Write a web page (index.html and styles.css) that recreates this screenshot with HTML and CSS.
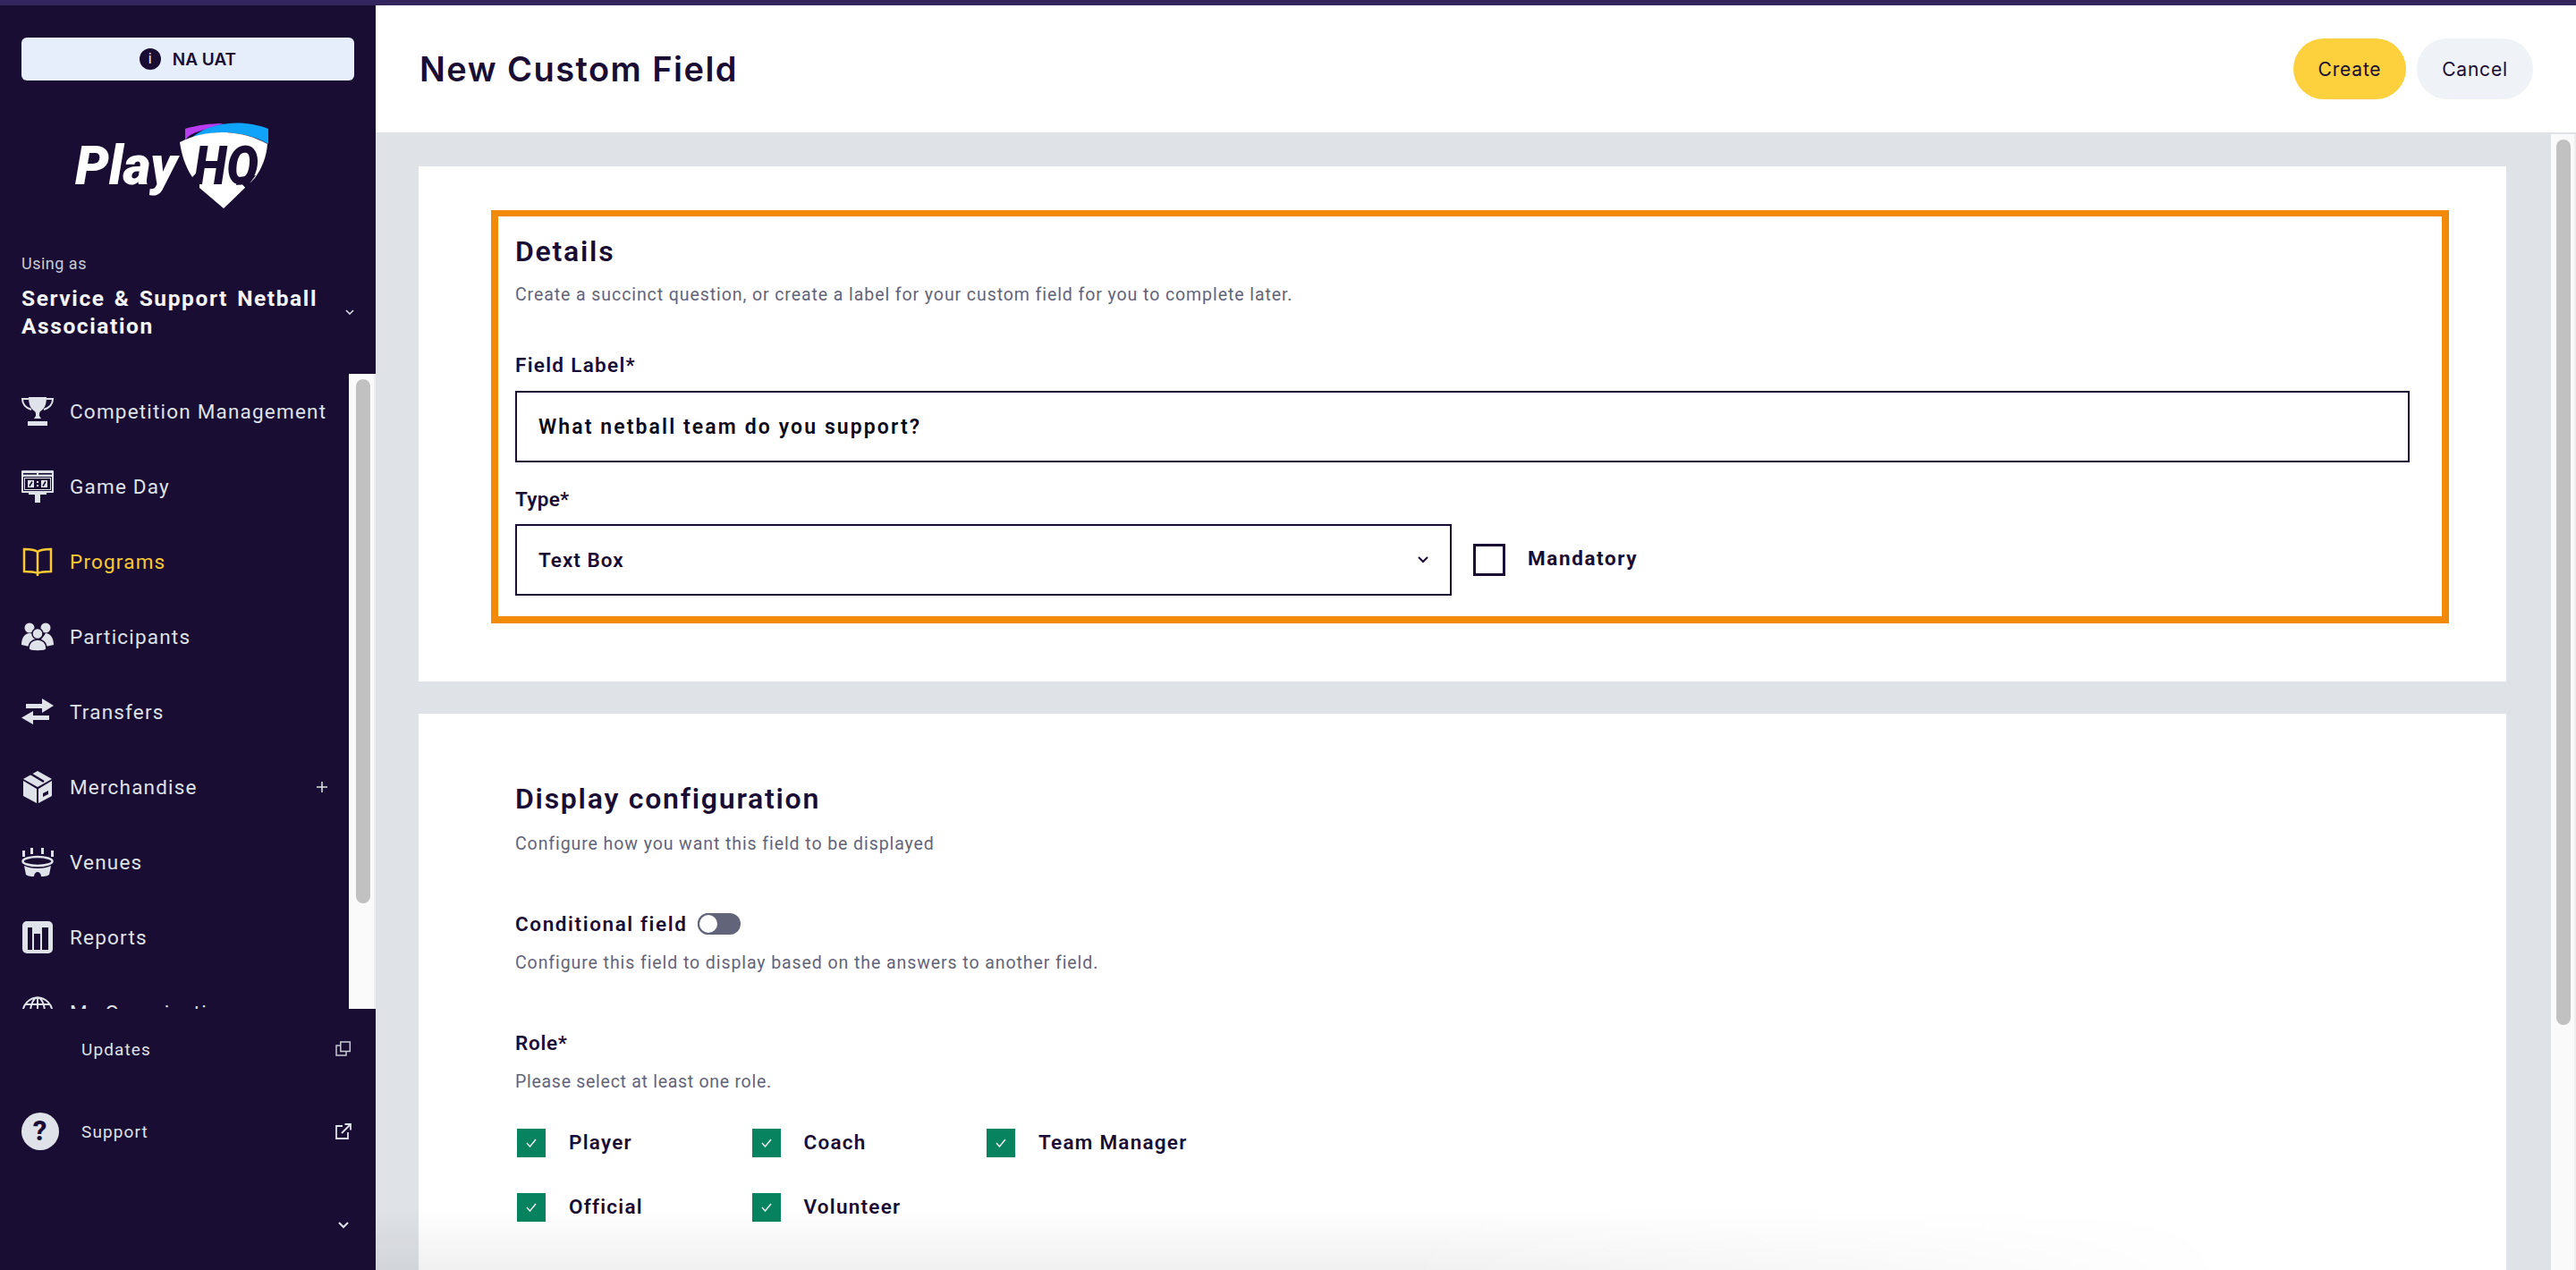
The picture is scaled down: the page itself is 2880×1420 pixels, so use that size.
FILE: index.html
```html
<!DOCTYPE html>
<html lang="en">
<head>
<meta charset="utf-8">
<title>New Custom Field</title>
<link rel="stylesheet" href="styles.css">
</head>
<body>
<div class="topline"></div>
<div class="app">
  <aside class="sidebar">
    <div class="env"><span class="env-i">i</span><span>NA UAT</span></div>
    <svg class="logo" viewBox="0 0 260 130" width="260" height="130">
      <path fill="#b93df0" d="M147 24C160 20 175 18 190 18L165 26C155 29 150 32 147 37Z"/>
      <path fill="#0fa3fb" d="M152 36C175 14 215 14 240 24L240 41C215 26 175 24 152 36Z"/>
      <path fill="#fff" d="M141 39C170 24 210 24 239 41C238 55 233 68 225 79L219 85L190 113L163 90L163 70L155 78C147 66 143 53 141 39Z"/>
      <text class="logo-play" x="24" y="86" textLength="114" lengthAdjust="spacingAndGlyphs">Play</text>
      <text class="logo-hq" x="157" y="86" textLength="72" lengthAdjust="spacingAndGlyphs">HQ</text>
      <path fill="#1a0d33" d="M206 78L226 76L219 85L204 87Z"/>
    </svg>
    <div class="using">Using as</div>
    <div class="org">
      <div class="org-name">Service &amp; Support Netball Association</div>
      <svg class="org-chev" viewBox="0 0 10 6" width="10" height="6"><path d="M1 1l4 4 4-4" fill="none" stroke="#dfe2e8" stroke-width="1.5"/></svg>
    </div>
    <div class="nav">
      <nav class="nav-list">
        <a class="nav-item">
          <svg class="nav-icon" viewBox="0 0 36 36"><g fill="#dfe2e8"><path d="M8 2h20c0 8-2 13-7 16l-1 2v3l2 3H14l2-3v-3l-1-2C10 15 8 10 8 2z"/><rect x="7" y="29" width="22" height="5"/></g><path d="M8 4H1c0 6 4 10 10 12M28 4h7c0 6-4 10-10 12" fill="none" stroke="#dfe2e8" stroke-width="2"/></svg>
          <span>Competition Management</span>
        </a>
        <a class="nav-item">
          <svg class="nav-icon" viewBox="0 0 36 36"><g fill="#dfe2e8"><rect x="0" y="0" width="36" height="25" rx="1"/><rect x="8" y="25" width="20" height="2"/><rect x="15" y="27" width="6" height="9"/></g><g fill="#1a0d33"><rect x="2" y="3" width="15" height="1.6"/><rect x="19" y="3" width="15" height="1.6"/><rect x="2" y="7" width="32" height="16"/></g><rect x="3.500" y="8.500" width="29" height="13" fill="none" stroke="#dfe2e8"/><g fill="#dfe2e8"><rect x="7" y="11" width="7" height="8"/><rect x="22" y="11" width="7" height="8"/><rect x="17" y="12" width="2" height="2"/><rect x="17" y="16" width="2" height="2"/></g><path d="M9 17.500l3-5M24 17.500l3-5" stroke="#1a0d33" stroke-width="1.500"/></svg>
          <span>Game Day</span>
        </a>
        <a class="nav-item nav-active">
          <svg class="nav-icon" viewBox="0 0 36 36"><path d="M18 7C14 4 8 4 3 4v25c6 0 11 0 15 2 4-2 9-2 15-2V4c-5 0-11 0-15 3zm0 0v27" fill="none" stroke="#fcc934" stroke-width="2.500"/></svg>
          <span>Programs</span>
        </a>
        <a class="nav-item">
          <svg class="nav-icon" viewBox="0 0 36 36"><g fill="#dfe2e8"><circle cx="9" cy="8" r="5.500"/><circle cx="27" cy="8" r="5.500"/><path d="M0 27c0-8 4-13 9-13s8 3 9 8 9-8 9-8c5 0 9 5 9 13l-9 2H9z"/></g><circle cx="18" cy="14.500" r="6" fill="#dfe2e8" stroke="#1a0d33" stroke-width="1.500"/><path d="M8 31c0-6 4-10 10-10s10 4 10 10c0 2-5 3-10 3s-10-1-10-3z" fill="#dfe2e8" stroke="#1a0d33" stroke-width="1.500"/></svg>
          <span>Participants</span>
        </a>
        <a class="nav-item">
          <svg class="nav-icon" viewBox="0 0 36 36"><path fill="#dfe2e8" d="M23 3l13 8-13 8v-5H5V9h18zM13 17v5h18v5H13v5L0 24.500z"/></svg>
          <span>Transfers</span>
        </a>
        <a class="nav-item">
          <svg class="nav-icon" viewBox="0 0 36 36"><g fill="#dfe2e8"><path d="M18 0l16 9-16 9-16-9z"/><path d="M2 11l15 9v16L2 28z"/><path d="M34 11l-15 9v16l15-8z"/></g><path d="M10 3l15 9" stroke="#1a0d33" stroke-width="2.500"/><path d="M24 25l6-3v4l-6 3z" fill="#1a0d33"/></svg>
          <span>Merchandise</span>
          <svg class="nav-plus" viewBox="0 0 12 12" width="12" height="12"><path d="M6 0v12M0 6h12" stroke="#dfe2e8" stroke-width="1.500"/></svg>
        </a>
        <a class="nav-item">
          <svg class="nav-icon" viewBox="0 0 36 36"><g fill="#dfe2e8"><rect x="1" y="5" width="3" height="7"/><rect x="10" y="2" width="3" height="7"/><rect x="22" y="2" width="3" height="7"/><rect x="33" y="5" width="3" height="7"/><path d="M3 22c4 2 9 3 15 3s11-1 15-3l-2 10c-3 2-6 2-9 2 0-3-2-5-4-5s-4 2-4 5c-3 0-6 0-9-2z"/></g><ellipse cx="18" cy="17" rx="16.500" ry="5" fill="none" stroke="#dfe2e8" stroke-width="2.500"/></svg>
          <span>Venues</span>
        </a>
        <a class="nav-item">
          <svg class="nav-icon" viewBox="0 0 36 36"><rect x="1" y="0" width="34" height="36" rx="5" fill="#dfe2e8"/><g fill="#1a0d33"><rect x="7" y="7" width="5" height="25"/><rect x="14" y="14" width="7" height="18"/><rect x="23" y="7" width="7" height="25"/></g></svg>
          <span>Reports</span>
        </a>
        <a class="nav-item">
          <svg class="nav-icon" viewBox="0 0 36 36"><g fill="none" stroke="#dfe2e8" stroke-width="2"><circle cx="18" cy="18" r="16.500"/><ellipse cx="18" cy="18" rx="8" ry="16.500"/><path d="M18 1v34M2 18h32M4 9h28M4 27h28"/></g></svg>
          <span>My Organisation</span>
        </a>
      </nav>
      <div class="side-track"><div class="side-thumb"></div></div>
    </div>
    <div class="side-foot">
      <div class="foot-row">
        <span class="foot-blank"></span>
        <span>Updates</span>
        <svg class="foot-ext" viewBox="0 0 18 18" width="18" height="18"><path d="M5 5H1v11h11v-4" fill="none" stroke="#c9cad4" stroke-width="1.500"/><rect x="5.800" y="1" width="10.500" height="10.500" fill="none" stroke="#c9cad4" stroke-width="1.500"/></svg>
      </div>
      <div class="foot-row foot-support">
        <span class="foot-help">?</span>
        <span>Support</span>
        <svg class="foot-ext" viewBox="0 0 18 18" width="18" height="18"><path d="M8 3H1v14h13v-7M7 11L17 1M10.500 1H17v6.500" fill="none" stroke="#dfe2e8" stroke-width="1.800"/></svg>
      </div>
      <div class="foot-chev"><svg viewBox="0 0 12 8" width="12" height="8"><path d="M1 1l5 5 5-5" fill="none" stroke="#dfe2e8" stroke-width="2"/></svg></div>
    </div>
  </aside>
  <main class="main">
    <header class="head">
      <h1 class="title">New Custom Field</h1>
      <div class="actions">
        <button class="btn btn-create">Create</button>
        <button class="btn btn-cancel">Cancel</button>
      </div>
    </header>
    <div class="body">
      <div class="content">
        <section class="card card-details">
          <div class="highlight">
            <h2 class="h2">Details</h2>
            <p class="sub sub-details">Create a succinct question, or create a label for your custom field for you to complete later.</p>
            <div class="label label-first">Field Label*</div>
            <div class="control control-text">What netball team do you support?</div>
            <div class="label label-type">Type*</div>
            <div class="type-row">
              <div class="control control-select"><span>Text Box</span>
                <svg viewBox="0 0 12 8" width="12" height="8"><path d="M1 1l5 5 5-5" fill="none" stroke="#1a0d33" stroke-width="2"/></svg>
              </div>
              <span class="box"></span>
              <span class="mandatory">Mandatory</span>
            </div>
          </div>
        </section>
        <section class="card card-display">
          <h2 class="h2">Display configuration</h2>
          <p class="sub sub-display">Configure how you want this field to be displayed</p>
          <div class="cond-row"><span class="label label-cond">Conditional field</span><span class="toggle"><span class="knob"></span></span></div>
          <p class="sub sub-cond">Configure this field to display based on the answers to another field.</p>
          <div class="label label-role">Role*</div>
          <p class="sub sub-role">Please select at least one role.</p>
          <div class="roles">
            <div class="role"><span class="tick"><svg viewBox="0 0 12 10" width="12" height="10"><path d="M1 5l3.500 4L11 1" fill="none" stroke="#fff" stroke-width="1.300"/></svg></span><span class="role-name">Player</span></div>
            <div class="role"><span class="tick"><svg viewBox="0 0 12 10" width="12" height="10"><path d="M1 5l3.500 4L11 1" fill="none" stroke="#fff" stroke-width="1.300"/></svg></span><span class="role-name">Coach</span></div>
            <div class="role"><span class="tick"><svg viewBox="0 0 12 10" width="12" height="10"><path d="M1 5l3.500 4L11 1" fill="none" stroke="#fff" stroke-width="1.300"/></svg></span><span class="role-name">Team Manager</span></div>
            <div class="role"><span class="tick"><svg viewBox="0 0 12 10" width="12" height="10"><path d="M1 5l3.500 4L11 1" fill="none" stroke="#fff" stroke-width="1.300"/></svg></span><span class="role-name">Official</span></div>
            <div class="role"><span class="tick"><svg viewBox="0 0 12 10" width="12" height="10"><path d="M1 5l3.500 4L11 1" fill="none" stroke="#fff" stroke-width="1.300"/></svg></span><span class="role-name">Volunteer</span></div>
          </div>
        </section>
      </div>
      <div class="track"><div class="thumb"></div></div>
      <div class="fade"></div>
    </div>
  </main>
</div>
</body>
</html>
```

FILE: styles.css
```css
* { box-sizing: border-box; }
html, body { margin: 0; padding: 0; height: 100%; overflow: hidden; }
body { font-family: Roboto, "Noto Sans", sans-serif; color: #1a0d33; background: #fff; }
.topline { height: 6px; background: #33265f; }
.app { display: flex; height: 1414px; }

/* sidebar */
.sidebar { width: 420px; flex: none; background: #1a0d33; display: flex; flex-direction: column; color: #dfe2e8; }
.env { margin: 36px 24px 0; height: 48px; border-radius: 6px; background: #e6eefc; color: #1a0d33; display: flex; align-items: center; justify-content: center; gap: 13px; font: 600 19px Inter, sans-serif; }
.env-i { width: 24px; height: 24px; border-radius: 50%; background: #1a0d33; color: #e6eefc; font: 400 16px/24px Roboto, sans-serif; text-align: center; }
.logo { display: block; margin: 30px 0 0 60px; flex: none; }
.logo-play, .logo-hq { font-family: Roboto, sans-serif; font-style: italic; font-weight: 900; font-size: 61px; }
.logo-play { fill: #fff; }
.logo-hq { fill: #1a0d33; }
.using { margin: 33px 0 0 24px; font-size: 18px; line-height: 24px; letter-spacing: 0.5px; color: #c9cad4; }
.org { margin: 11px 0 0 24px; display: flex; align-items: center; }
.org-name { width: 361px; font-size: 24.5px; font-weight: 700; line-height: 31px; letter-spacing: 1.6px; word-spacing: 2.5px; color: #f4f5f8; }
.org-chev { flex: none; margin-left: 1px; }
.nav { margin-top: 38px; height: 710px; display: flex; overflow: hidden; background: #eee; padding-right: 2px; flex: none; }
.nav-list { width: 390px; background: #1a0d33; flex: none; height: 756px; }
.nav-item { height: 84px; display: flex; align-items: center; padding: 0 24px; gap: 18px; font-size: 22.5px; letter-spacing: 1.2px; color: #dfe2e8; }
.nav-icon { width: 36px; height: 36px; flex: none; }
.nav-active { color: #fcc934; }
.nav-plus { margin-left: auto; }
.side-track { width: 28px; background: #fafafa; padding: 6px 4px 0 8px; }
.side-thumb { height: 586px; background: #c1c1c1; border-radius: 8px; }
.side-foot { flex: 1; padding-top: 22px; font-size: 19px; letter-spacing: 1.1px; color: #dfe2e8; }
.foot-row { height: 46px; display: flex; align-items: center; padding: 0 27px 0 24px; gap: 25px; }
.foot-support { margin-top: 46px; }
.foot-blank { width: 42px; flex: none; }
.foot-help { width: 42px; height: 42px; border-radius: 50%; background: #dfe2e8; color: #1a0d33; font: 800 31px/42px Roboto, sans-serif; text-align: center; flex: none; }
.foot-ext { margin-left: auto; flex: none; }
.foot-chev { margin-top: 78px; padding-right: 30px; display: flex; justify-content: flex-end; }
.foot-chev svg { display: block; }

/* main */
.main { flex: 1; display: flex; flex-direction: column; min-width: 0; }
.head { height: 142px; flex: none; display: flex; align-items: center; justify-content: space-between; padding: 0 48px 0 49px; background: #fff; }
.title { margin: 0; font: 600 38px/48px Inter, sans-serif; letter-spacing: 1.45px; }
.actions { display: flex; gap: 12px; }
.btn { height: 68px; border: 0; border-radius: 34px; font: 400 21px Inter, sans-serif; letter-spacing: 0.8px; color: #1a0d33; }
.btn-create { width: 126px; background: #fdd13e; }
.btn-cancel { width: 130px; background: #eff2f7; }
.body { flex: 1; position: relative; display: flex; background: #dfe2e7; overflow: hidden; min-height: 0; }
.content { flex: 1; padding: 38px 50px 0 48px; min-width: 0; }
.card { background: #fff; }
.card-details { height: 576px; padding: 49px 64px 0 81px; }
.card-display { margin-top: 36px; height: 800px; padding: 75px 108px 0; }
.highlight { height: 462px; border: 8px solid #f28a07; border-top-width: 7px; padding: 19px 36px 0 19px; }
.h2 { margin: 0; font-size: 32px; line-height: 40px; font-weight: 600; letter-spacing: 1.75px; }
.sub { margin: 16px 0 0; font-size: 19.5px; line-height: 28px; color: #62647a; letter-spacing: 0.92px; }
.sub-details { margin-top: 15px; }
.label { font-size: 22.5px; line-height: 28px; font-weight: 600; letter-spacing: 0.5px; }
.label-first { margin-top: 50px; letter-spacing: 1.3px; }
.label-type { margin-top: 27px; letter-spacing: 0.3px; }
.label-cond { letter-spacing: 1.6px; }
.control { height: 80px; border: 2.5px solid #1a0d33; background: #fff; font-size: 22.5px; font-weight: 600; letter-spacing: 1px; display: flex; align-items: center; padding: 0 24px; }
.control-text { margin-top: 15px; color: #0c0a18; font-size: 23px; letter-spacing: 2.1px; }
.type-row { margin-top: 14px; display: flex; align-items: center; }
.control-select { width: 1047px; justify-content: space-between; padding-right: 24px; }
.box { width: 36px; height: 36px; border: 3px solid #1a0d33; margin-left: 24px; flex: none; }
.mandatory { margin-left: 25px; font-size: 22.5px; font-weight: 700; letter-spacing: 1.6px; position: relative; top: -2px; }
.sub-display { margin-top: 17px; }
.cond-row { margin-top: 61px; display: flex; align-items: center; gap: 12px; }
.toggle { width: 48px; height: 24px; border-radius: 12px; background: #62647a; position: relative; flex: none; }
.knob { position: absolute; left: 0; top: 0; width: 24px; height: 24px; border-radius: 50%; background: #fff; border: 2px solid #62647a; }
.sub-cond { margin-top: 16px; }
.label-role { margin-top: 61px; letter-spacing: 0.7px; }
.sub-role { margin-top: 16px; letter-spacing: 0.72px; }
.roles { margin: 38px 0 0 2px; display: grid; grid-template-columns: repeat(3, 262.5px); grid-auto-rows: 32px; row-gap: 40px; }
.role { display: flex; align-items: center; gap: 26px; font-size: 22.5px; font-weight: 600; letter-spacing: 1.25px; }
.role-name { padding-bottom: 3px; }
.tick { width: 32px; height: 32px; background: #07845f; display: flex; align-items: center; justify-content: center; flex: none; }
.track { width: 28px; flex: none; background: #fafafa; border-right: 2px solid #eee; margin-top: 2px; padding: 6px 4px 0 6px; }
.thumb { height: 990px; border-radius: 8px; background: #c1c1c1; }
.fade { position: absolute; left: 0; bottom: 0; width: 2080px; height: 70px; background: linear-gradient(to top, rgba(0, 0, 0, 0.06), rgba(0, 0, 0, 0)); -webkit-mask-image: linear-gradient(to right, #000 55%, transparent); mask-image: linear-gradient(to right, #000 55%, transparent); pointer-events: none; }
```
